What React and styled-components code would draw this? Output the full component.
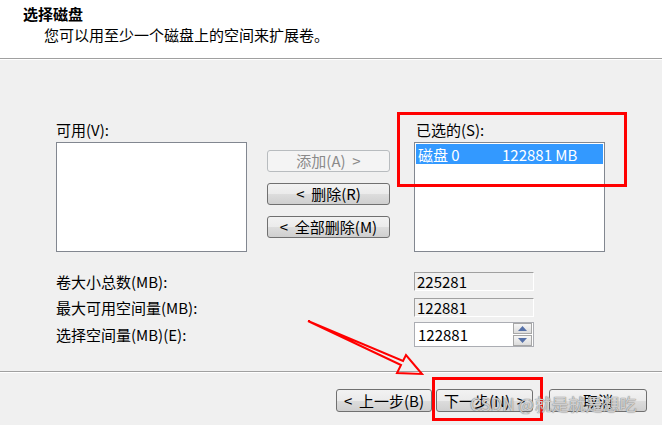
import React from 'react';
import styled, { createGlobalStyle } from 'styled-components';

const Global = createGlobalStyle`
  html, body { margin: 0; padding: 0; background: #f0f0f0; }
  * { box-sizing: border-box; }
`;

const Frame = styled.div`
  position: relative;
  width: 662px;
  height: 425px;
  overflow: hidden;
  background: #f0f0f0;
  font-family: "Noto Sans CJK SC", sans-serif;
  font-size: 15px;
  color: #000;
`;

const Header = styled.div`
  height: 59px;
  padding: 5px 0 0 23px;
  background: #fff;
  border-bottom: 1px solid #a0a0a0;
  box-shadow: 0 1px 0 #fff;
`;

const Title = styled.div`
  font-weight: 700;
  line-height: 18px;
`;

const Subtitle = styled.div`
  margin-top: 3px;
  padding-left: 21px;
  line-height: 18px;
`;

const Body = styled.div`
  height: 312px;
  padding: 62px 0 0 56px;
`;

const ListsRow = styled.div`
  display: flex;
  align-items: flex-start;
`;

const ListColumn = styled.div`
  width: 191px;
  margin-left: ${p => p.$offset || 0}px;
`;

const Label = styled.div`
  line-height: 18px;
  margin-bottom: 3px;
  padding-left: ${p => p.$indent || 0}px;
  white-space: nowrap;
`;

const ListBox = styled.div`
  height: 110px;
  background: #fff;
  border: 1px solid #828790;
`;

const SelectedItem = styled.div`
  display: flex;
  align-items: center;
  height: 20px;
  margin: 1px;
  padding-left: 2px;
  background: #3399ff;
  color: #fff;
  white-space: pre;
`;

const ItemName = styled.span`
  width: 84px;
`;

const ButtonColumn = styled.div`
  display: flex;
  flex-direction: column;
  gap: 11px;
  width: 123px;
  margin-left: 20px;
  padding-top: 29px;
`;

const Button = styled.div`
  display: flex;
  align-items: center;
  justify-content: center;
  width: ${p => p.$w || 123}px;
  height: ${p => p.$h || 22}px;
  margin-left: ${p => p.$ml || 0}px;
  border: 1px solid ${p => (p.$disabled ? '#b8bcbf' : '#707070')};
  border-radius: 3px;
  background: ${p =>
    p.$disabled
      ? '#f4f4f4'
      : 'linear-gradient(#f2f2f2 0%, #ebebeb 50%, #dddddd 51%, #cfcfcf 100%)'};
  color: ${p => (p.$disabled ? '#8a8a8a' : '#000')};
  line-height: 18px;
  white-space: pre;
`;

const FieldRow = styled.div`
  display: flex;
  align-items: center;
  height: ${p => p.$h}px;
  margin-top: ${p => p.$mt}px;
`;

const FieldLabel = styled.div`
  width: 358px;
  line-height: 18px;
  white-space: nowrap;
`;

const ReadField = styled.div`
  width: 120px;
  height: 19px;
  padding-left: 2px;
  line-height: 17px;
  background: #f0f0f0;
  border: 1px solid;
  border-color: #a0a0a0 #fff #fff #a0a0a0;
`;

const SpinField = styled.div`
  display: flex;
  align-items: center;
  justify-content: space-between;
  width: 120px;
  height: 25px;
  padding: 0 1px 0 3px;
  background: #fff;
  border: 1px solid #abadb3;
`;

const SpinButtons = styled.div`
  display: flex;
  flex-direction: column;
  gap: 1px;
`;

const SpinButton = styled.div`
  display: flex;
  align-items: center;
  justify-content: center;
  width: 19px;
  height: 11px;
  border: 1px solid #a7a7a7;
  background: linear-gradient(#f6f6f6, #dcdcdc);
`;

const Footer = styled.div`
  display: flex;
  justify-content: flex-end;
  height: 54px;
  padding: 17px 15px 0 0;
  border-top: 1px solid #a0a0a0;
  box-shadow: inset 0 1px 0 #fff;
`;

const Overlay = styled.svg`
  position: absolute;
  left: 0;
  top: 0;
  pointer-events: none;
`;

const Watermark = styled.div`
  position: absolute;
  left: 470px;
  top: 394px;
  font-size: 17px;
  line-height: 20px;
  color: rgba(235, 235, 235, 0.75);
  text-shadow: 0 0 1px rgba(110, 110, 110, 0.8), 0 0 1px rgba(110, 110, 110, 0.8);
  white-space: nowrap;
  pointer-events: none;
`;

const Triangle = ({ down }) => (
  <svg width="9" height="5" viewBox="0 0 9 5">
    <polygon points={down ? '0,0 9,0 4.5,5' : '0,5 9,5 4.5,0'} fill="#5570a8" />
  </svg>
);

export default function App() {
  return (
    <Frame>
      <Global />
      <Header>
        <Title>选择磁盘</Title>
        <Subtitle>您可以用至少一个磁盘上的空间来扩展卷。</Subtitle>
      </Header>
      <Body>
        <ListsRow>
          <ListColumn>
            <Label>可用(V):</Label>
            <ListBox />
          </ListColumn>
          <ButtonColumn>
            <Button $disabled>添加(A)  &gt;</Button>
            <Button>&lt;  删除(R)</Button>
            <Button>&lt;  全部删除(M)</Button>
          </ButtonColumn>
          <ListColumn $offset={24}>
            <Label $indent={2}>已选的(S):</Label>
            <ListBox>
              <SelectedItem>
                <ItemName>磁盘 0</ItemName>
                <span>122881 MB</span>
              </SelectedItem>
            </ListBox>
          </ListColumn>
        </ListsRow>
        <FieldRow $h={19} $mt={20}>
          <FieldLabel>卷大小总数(MB):</FieldLabel>
          <ReadField>225281</ReadField>
        </FieldRow>
        <FieldRow $h={19} $mt={7}>
          <FieldLabel>最大可用空间量(MB):</FieldLabel>
          <ReadField>122881</ReadField>
        </FieldRow>
        <FieldRow $h={25} $mt={5}>
          <FieldLabel>选择空间量(MB)(E):</FieldLabel>
          <SpinField>
            <span>122881</span>
            <SpinButtons>
              <SpinButton><Triangle /></SpinButton>
              <SpinButton><Triangle down /></SpinButton>
            </SpinButtons>
          </SpinField>
        </FieldRow>
      </Body>
      <Footer>
        <Button $w={96} $h={23}>&lt;  上一步(B)</Button>
        <Button $w={97} $h={23} $ml={4}>下一步(N)  &gt;</Button>
        <Button $w={98} $h={23} $ml={16}>取消</Button>
      </Footer>

      <Overlay width="662" height="425" viewBox="0 0 662 425">
        <rect x="398.5" y="113.5" width="227" height="72" fill="none" stroke="#ff0000" strokeWidth="3" />
        <rect x="433.5" y="378.5" width="108" height="41" fill="none" stroke="#ff0000" strokeWidth="3" />
        <polygon
          points="308,321 403,361 406,355 422,374 397,373 401,365"
          fill="none"
          stroke="#ff0000"
          strokeWidth="2"
          strokeLinejoin="miter"
        />
      </Overlay>
      <Watermark>CSDN @就是就是想吃</Watermark>
    </Frame>
  );
}
